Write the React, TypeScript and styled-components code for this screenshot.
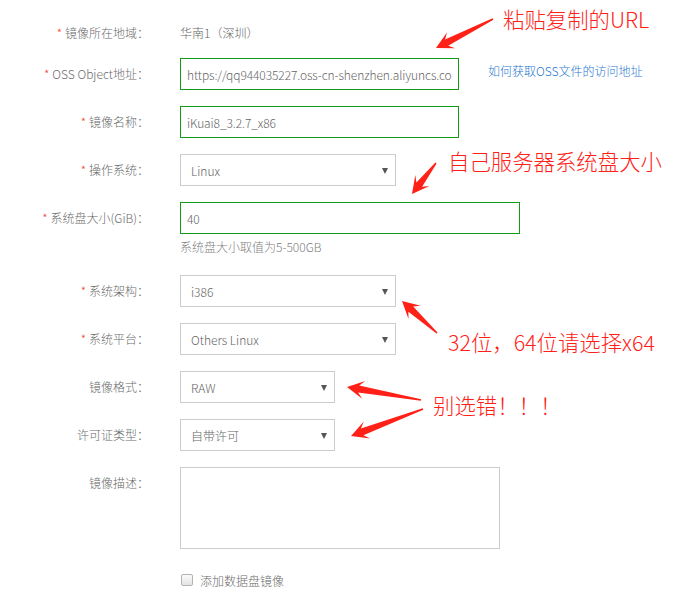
import React from "react";
import styled, { createGlobalStyle } from "styled-components";

const Global = createGlobalStyle`
  html, body { margin: 0; padding: 0; background: #fff; }
  body { font-family: "Noto Sans CJK SC", "Noto Sans", sans-serif; }
  * { box-sizing: border-box; }
`;

const Page = styled.div`
  position: relative;
  width: 680px;
  height: 609px;
  overflow: hidden;
  background: #fff;
`;

const Form = styled.div`
  display: flex;
  flex-direction: column;
  padding-top: 17px;
`;

const Row = styled.div<{ $mb: number }>`
  display: flex;
  align-items: flex-start;
  margin-bottom: ${(p) => p.$mb}px;
`;

const Label = styled.div`
  width: 149px;
  margin-right: 31px;
  flex-shrink: 0;
  text-align: right;
  font-size: 12px;
  font-weight: 300;
  line-height: 32px;
  color: #6b6b6b;
  white-space: nowrap;
`;

const Star = styled.span`
  color: #f04134;
  margin-right: 3px;
  font-size: 12px;
`;

const Field = styled.div`
  display: flex;
  flex-direction: column;
`;

const Value = styled.div`
  font-size: 12px;
  font-weight: 300;
  line-height: 32px;
  color: #666;
`;

const TextInput = styled.input<{ $w: number; $ok?: boolean }>`
  width: ${(p) => p.$w}px;
  height: 32px;
  border: 1px solid ${(p) => (p.$ok ? "#159a15" : "#ccc")};
  padding: 0 6px;
  font-family: "Noto Sans CJK SC", "Noto Sans", sans-serif;
  font-size: 12px;
  font-weight: 300;
  letter-spacing: -0.1px;
  color: #666;
  background: #fff;
  outline: none;
  border-radius: 0;
`;

const SelectBox = styled.div<{ $w: number }>`
  width: ${(p) => p.$w}px;
  height: 32px;
  border: 1px solid #ccc;
  padding: 0 7px 0 10px;
  display: flex;
  align-items: center;
  justify-content: space-between;
  font-size: 12px;
  font-weight: 300;
  color: #666;
  background: #fff;
`;

const Caret = styled.span`
  width: 0;
  height: 0;
  border-left: 3px solid transparent;
  border-right: 3px solid transparent;
  border-top: 6px solid #555;
  margin-top: 1px;
`;

const Help = styled.div`
  margin-top: 4px;
  font-size: 12px;
  font-weight: 300;
  line-height: 18px;
  color: #808080;
`;

const HelpLink = styled.a`
  margin-left: 29px;
  font-size: 12px;
  font-weight: 300;
  line-height: 26px;
  color: #1f78d0;
  text-decoration: none;
  white-space: nowrap;
`;

const TextArea = styled.textarea`
  width: 320px;
  height: 82px;
  border: 1px solid #ccc;
  resize: none;
  outline: none;
  border-radius: 0;
  font-family: "Noto Sans CJK SC", sans-serif;
  font-size: 12px;
`;

const CheckRow = styled.label`
  display: flex;
  align-items: center;
  margin-left: 181px;
  height: 18px;
  font-size: 12px;
  font-weight: 300;
  color: #6b6b6b;
`;

const CheckBox = styled.span`
  width: 12px;
  height: 12px;
  border: 1px solid #b4b4b4;
  border-radius: 2px;
  background: linear-gradient(#fafafa, #e4e4e4);
  margin-right: 7px;
`;

const Overlay = styled.svg`
  position: absolute;
  left: 0;
  top: 0;
  pointer-events: none;
`;

const Note = styled.div<{ $x: number; $y: number }>`
  position: absolute;
  left: ${(p) => p.$x}px;
  top: ${(p) => p.$y}px;
  font-family: "Noto Sans CJK SC", sans-serif;
  font-size: 21.4px;
  font-weight: 300;
  line-height: 21px;
  color: #ff2118;
  white-space: nowrap;
`;

type Pt = [number, number];

function arrowPoints(t: Pt, p: Pt): string {
  const dx = p[0] - t[0];
  const dy = p[1] - t[1];
  const len = Math.hypot(dx, dy);
  const d: Pt = [dx / len, dy / len];
  const n: Pt = [-d[1], d[0]];
  const L = 17;
  const W = 9;
  const s0 = 0.8;
  const s1 = 3.6;
  const J: Pt = [p[0] - d[0] * L * 0.7, p[1] - d[1] * L * 0.7];
  const B: Pt = [p[0] - d[0] * L, p[1] - d[1] * L];
  const pts: Pt[] = [
    [t[0] + n[0] * s0, t[1] + n[1] * s0],
    [J[0] + n[0] * s1, J[1] + n[1] * s1],
    [B[0] + n[0] * W, B[1] + n[1] * W],
    p,
    [B[0] - n[0] * W, B[1] - n[1] * W],
    [J[0] - n[0] * s1, J[1] - n[1] * s1],
    [t[0] - n[0] * s0, t[1] - n[1] * s0],
  ];
  return pts.map((q) => `${q[0].toFixed(1)},${q[1].toFixed(1)}`).join(" ");
}

const arrows: [Pt, Pt][] = [
  [[493, 19], [436, 48]],
  [[436, 163], [412, 194]],
  [[437, 333], [402, 301]],
  [[421, 400], [347, 387]],
  [[423, 409], [351, 436]],
];

export default function App() {
  return (
    <Page>
      <Global />
      <Form>
        <Row $mb={9}>
          <Label>
            <Star>*</Star>镜像所在地域：
          </Label>
          <Value>华南1（深圳）</Value>
        </Row>
        <Row $mb={16}>
          <Label>
            <Star>*</Star>OSS Object地址：
          </Label>
          <TextInput
            $w={279}
            $ok
            readOnly
            value="https://qq944035227.oss-cn-shenzhen.aliyuncs.com/iKuai8_3.2.7_x86.img"
          />
          <HelpLink href="#">如何获取OSS文件的访问地址</HelpLink>
        </Row>
        <Row $mb={16}>
          <Label>
            <Star>*</Star>镜像名称：
          </Label>
          <TextInput $w={279} $ok readOnly value="iKuai8_3.2.7_x86" />
        </Row>
        <Row $mb={16}>
          <Label>
            <Star>*</Star>操作系统：
          </Label>
          <SelectBox $w={216}>
            <span>Linux</span>
            <Caret />
          </SelectBox>
        </Row>
        <Row $mb={19}>
          <Label>
            <Star>*</Star>系统盘大小(GiB)：
          </Label>
          <Field>
            <TextInput $w={340} $ok readOnly value="40" />
            <Help>系统盘大小取值为5-500GB</Help>
          </Field>
        </Row>
        <Row $mb={16}>
          <Label>
            <Star>*</Star>系统架构：
          </Label>
          <SelectBox $w={216}>
            <span>i386</span>
            <Caret />
          </SelectBox>
        </Row>
        <Row $mb={16}>
          <Label>
            <Star>*</Star>系统平台：
          </Label>
          <SelectBox $w={216}>
            <span>Others Linux</span>
            <Caret />
          </SelectBox>
        </Row>
        <Row $mb={16}>
          <Label>镜像格式：</Label>
          <SelectBox $w={155}>
            <span>RAW</span>
            <Caret />
          </SelectBox>
        </Row>
        <Row $mb={16}>
          <Label>许可证类型：</Label>
          <SelectBox $w={155}>
            <span>自带许可</span>
            <Caret />
          </SelectBox>
        </Row>
        <Row $mb={22}>
          <Label>镜像描述：</Label>
          <TextArea readOnly />
        </Row>
        <CheckRow>
          <CheckBox />
          添加数据盘镜像
        </CheckRow>
      </Form>

      <Overlay width={680} height={609} viewBox="0 0 680 609">
        {arrows.map(([t, p], i) => (
          <polygon key={i} points={arrowPoints(t, p)} fill="#ff2118" />
        ))}
      </Overlay>
      <Note $x={503} $y={8}>粘贴复制的URL</Note>
      <Note $x={448} $y={150}>自己服务器系统盘大小</Note>
      <Note $x={448} $y={331}>32位，64位请选择x64</Note>
      <Note $x={433} $y={394}>别选错！！！</Note>
    </Page>
  );
}
